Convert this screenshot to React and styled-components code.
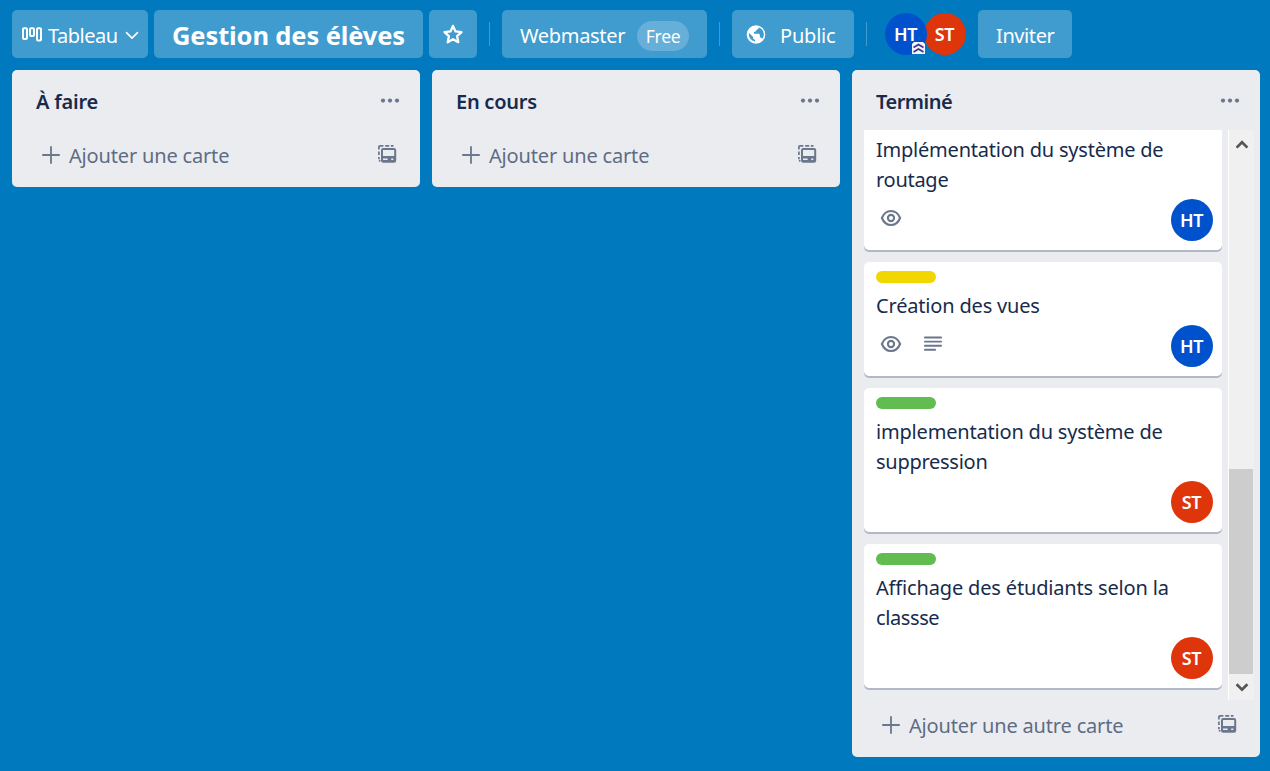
import React from "react";
import styled, { createGlobalStyle } from "styled-components";

const GlobalStyle = createGlobalStyle`
  * { box-sizing: border-box; }
  body {
    margin: 0;
    background: #0079bf;
    font-family: "Noto Sans", "Open Sans", sans-serif;
    font-size: 20px;
    color: #172b4d;
    overflow: hidden;
  }
  svg { display: block; flex: none; }
`;

const Page = styled.div`
  height: 771px;
  width: 1270px;
  padding: 10px 10px 14px 12px;
  display: flex;
  flex-direction: column;
  gap: 12px;
`;

const Header = styled.header`
  display: flex;
  align-items: center;
  height: 48px;
`;

const HeaderButton = styled.div`
  display: flex;
  align-items: center;
  justify-content: ${(p) => (p.$center ? "center" : "flex-start")};
  width: ${(p) => p.$width}px;
  height: 48px;
  padding-left: ${(p) => p.$pad || 0}px;
  margin-right: ${(p) => p.$after || 0}px;
  border-radius: 5px;
  background: #409bcf;
  color: #fff;
`;

const Text = styled.span`
  white-space: nowrap;
  line-height: 30px;
  letter-spacing: ${(p) => p.$track || 0}px;
`;

const ButtonText = styled(Text)`
  margin: 3px ${(p) => p.$right || 0}px 0 ${(p) => p.$left || 0}px;
`;

const BoardName = styled(Text)`
  margin-top: 2px;
  font-size: 25.5px;
  font-weight: 700;
`;

const Divider = styled.div`
  width: 1px;
  height: 24px;
  margin-right: 12px;
  background: #409bcf;
`;

const Plan = styled.span`
  display: flex;
  align-items: center;
  justify-content: center;
  width: 52px;
  height: 30px;
  margin: 4px 0 0 12px;
  border-radius: 15px;
  background: #66afd9;
  font-size: 17.5px;
  letter-spacing: -0.3px;
`;

const Members = styled.div`
  display: flex;
  margin: 0 12px 0 6px;
`;

const Avatar = styled.div`
  position: relative;
  z-index: ${(p) => (p.$front ? 1 : 0)};
  display: flex;
  align-items: center;
  justify-content: center;
  flex: none;
  width: 42px;
  height: 42px;
  margin-left: ${(p) => p.$overlap || 0}px;
  padding: 0 1px 1px 0;
  border-radius: 50%;
  background: ${(p) => (p.$who === "HT" ? "#0052cc" : "#de350b")};
  color: #fff;
  font-size: 18px;
  font-weight: 600;
  line-height: 24px;
  letter-spacing: -0.3px;
`;

const AdminMark = styled.div`
  position: absolute;
  right: 2px;
  bottom: 1px;
`;

const Board = styled.main`
  display: flex;
  flex: 1;
  align-items: flex-start;
  gap: 12px;
  min-height: 0;
`;

const List = styled.section`
  display: flex;
  flex-direction: column;
  width: 408px;
  height: ${(p) => (p.$full ? "687px" : "117px")};
  border-radius: 5px;
  background: #ebecf0;
`;

const ListHeader = styled.div`
  display: flex;
  align-items: center;
  justify-content: space-between;
  height: 60px;
  padding: 1px 20px 0 24px;
`;

const ListTitle = styled(Text)`
  margin-top: 3px;
  font-weight: 600;
`;

const ListFooter = styled.div`
  display: flex;
  align-items: center;
  height: 57px;
  padding: 0 23px 7px 30px;
  color: #5e6c84;
`;

const AddLabel = styled(Text)`
  flex: 1;
  margin: 2px 0 0 9px;
`;

const TemplateButton = styled.div`
  margin-bottom: 2px;
`;

const ListBody = styled.div`
  display: flex;
  height: 570px;
  padding-left: 12px;
`;

const Cards = styled.div`
  display: flex;
  flex-direction: column;
  justify-content: flex-end;
  gap: 12px;
  width: 358px;
  height: 570px;
  padding-bottom: 12px;
  overflow: hidden;
`;

const Card = styled.article`
  flex: none;
  padding: 9px 9px 9px 12px;
  border-radius: 5px;
  background: #fff;
  box-shadow: 0 2px 0 #b2b8c6;
`;

const Label = styled.div`
  width: 60px;
  height: 12px;
  margin-bottom: 8px;
  border-radius: 6px;
  background: ${(p) => p.$color};
`;

const CardTitle = styled.div`
  display: flex;
  flex-direction: column;
`;

const CardFooter = styled.div`
  display: flex;
  align-items: center;
  gap: 21px;
  height: 42px;
  margin-top: 4px;
  padding-left: 4px;

  ${Avatar} { margin-left: auto; }
`;

const Badge = styled.div`
  margin-bottom: 5px;
`;

const Scrollbar = styled.div`
  display: flex;
  flex-direction: column;
  justify-content: space-between;
  width: 26px;
  height: 570px;
  margin-left: 6px;
  padding-right: 1px;
  border-left: 1px solid #fff;
  background: #f0f0f0;
`;

const ScrollArrow = styled.div`
  display: flex;
  align-items: center;
  justify-content: center;
  height: 26px;
  padding: ${(p) => (p.$up ? 3 : 0)}px 0 0 1px;
`;

const ScrollThumb = styled.div`
  height: 205px;
  margin-top: auto;
  background: #cdcdcd;
`;

const BoardIcon = () => (
  <svg width="20" height="15" viewBox="0 0 20 15" fill="none" stroke="#fff" strokeWidth="2">
    <rect x="1" y="1.2" width="4" height="10.8" rx="1" />
    <rect x="8" y="1.2" width="4" height="7.8" rx="1" />
    <rect x="15" y="1.2" width="4" height="12.2" rx="1" />
  </svg>
);

const ChevronIcon = () => (
  <svg width="14" height="12" viewBox="0 0 14 12" fill="none" stroke="#fff" strokeWidth="1.6" strokeLinecap="round" strokeLinejoin="round">
    <path d="M1.500 4.600 7 10.100l5.500-5.500" />
  </svg>
);

const StarIcon = () => (
  <svg width="22" height="22" viewBox="0 0 22 22" fill="none" stroke="#fff" strokeWidth="2.300" strokeLinejoin="round">
    <path d="m11 2.900 2.500 5.500 6 .700-4.400 4.100 1.200 6-5.300-3-5.300 3 1.200-6-4.400-4.100 6-.700Z" />
  </svg>
);

const GlobeIcon = () => (
  <svg width="20" height="20" viewBox="0 0 20 20">
    <circle cx="10" cy="10.500" r="9.300" fill="#fff" />
    <path
      fill="#409bcf"
      d="M12.600 3.200c.3 1.500-.5 2.400-2.100 2.600-.3 1.500-1.100 2.100-2.600 2.200v1.700h4.300c1.100 0 1.700.7 1.700 1.700v2.200c1.100 0 1.800.4 2.300 1.200 1.900-2.300 2.100-5 .8-7.900-.9-1.700-2.400-3-4.400-3.700ZM3 8.900c-.7 4.500 1.800 7.800 6 8.700v-1.900c-1.200 0-1.900-.8-1.900-1.900v-.9Z"
    />
  </svg>
);

const AdminIcon = () => (
  <svg width="13" height="12" viewBox="0 0 13 12">
    <path fill="#f4f5f7" d="M2 0h9l2 2v10H0V2Z" />
    <path fill="none" stroke="#403294" strokeWidth="1.700" d="m1.500 5.500 5-3 5 3M1.500 10l5-3 5 3" />
  </svg>
);

const MoreIcon = () => (
  <svg width="20" height="6" viewBox="0 0 20 6" fill="#6b778c">
    <circle cx="3" cy="2.600" r="2.100" />
    <circle cx="10" cy="2.600" r="2.100" />
    <circle cx="17" cy="2.600" r="2.100" />
  </svg>
);

const PlusIcon = () => (
  <svg width="18" height="18" viewBox="0 0 18 18" stroke="#6b778c" strokeWidth="1.800" strokeLinecap="round">
    <path d="M9 .900v16.200M.900 9h16.200" />
  </svg>
);

const TemplateIcon = () => (
  <svg width="19" height="18" viewBox="0 0 19 18" fill="none" stroke="#6b778c">
    <path strokeWidth="1.700" d="M.900 4.500V2.200Q.900.900 2.200.900H5.400M7.200.900h4M12.800.900h2.700M.900 6.500v3.500M.900 12v2.200M.900 15.500l1.500.6" />
    <rect x="4" y="4" width="13.200" height="12.800" rx="1.200" strokeWidth="2" />
    <path fill="#6b778c" stroke="none" d="M4 11h13.200v5.600H4Z" />
    <path stroke="#ebecf0" strokeWidth="1.600" d="M5 14.200h4.600M13.200 14.200h2.100" />
  </svg>
);

const EyeIcon = () => (
  <svg width="22" height="18" viewBox="0 0 22 18" fill="none" stroke="#6b778c" strokeWidth="2.100">
    <path d="M1.900 9C3.800 4.300 6.800 2 11 2s7.200 2.300 9.100 7c-1.900 4.700-4.900 7-9.100 7S3.800 13.700 1.900 9Z" />
    <circle cx="11" cy="9" r="3.100" />
  </svg>
);

const DescriptionIcon = () => (
  <svg width="20" height="16" viewBox="0 0 20 16" stroke="#6b778c" strokeWidth="1.900" strokeLinecap="round">
    <path d="M1.900 1.500h16.200M1.900 5.600h16.200M1.900 9.700h16.200M1.900 13.800h10.200" />
  </svg>
);

const ArrowIcon = ({ up }) => (
  <svg width="14" height="10" viewBox="0 0 14 10" fill="none" stroke="#555" strokeWidth="2.700">
    <path d={up ? "m1.600 7.600 5.400-5.400 5.400 5.400" : "m1.600 2.200 5.400 5.400 5.400-5.400"} />
  </svg>
);

const cards = [
  { lines: [["Implémentation du système de", -0.22], ["routage", -0.28]], who: "HT", watch: true },
  { label: "#f2d600", lines: [["Création des vues", -0.18]], who: "HT", watch: true, description: true },
  { label: "#61bd4f", lines: [["implementation du système de", -0.19], ["suppression", -0.27]], who: "ST" },
  { label: "#61bd4f", lines: [["Affichage des étudiants selon la", -0.16], ["classse", -0.4]], who: "ST" },
];

function BoardList({ title, track, add, children }) {
  return (
    <List $full={!!children}>
      <ListHeader>
        <ListTitle $track={track}>{title}</ListTitle>
        <MoreIcon />
      </ListHeader>
      {children}
      <ListFooter>
        <PlusIcon />
        <AddLabel $track={-0.17}>{add}</AddLabel>
        <TemplateButton><TemplateIcon /></TemplateButton>
      </ListFooter>
    </List>
  );
}

export default function App() {
  return (
    <>
      <GlobalStyle />
      <Page>
        <Header>
          <HeaderButton $width={136} $pad={10} $after={6}>
            <BoardIcon />
            <ButtonText $track={-0.5} $left={6} $right={7}>Tableau</ButtonText>
            <ChevronIcon />
          </HeaderButton>
          <HeaderButton $width={269} $pad={18} $after={6}>
            <BoardName $track={-0.12}>Gestion des élèves</BoardName>
          </HeaderButton>
          <HeaderButton $width={48} $center $after={12}>
            <StarIcon />
          </HeaderButton>
          <Divider />
          <HeaderButton $width={205} $pad={18} $after={12}>
            <ButtonText $track={-0.33}>Webmaster</ButtonText>
            <Plan>Free</Plan>
          </HeaderButton>
          <Divider />
          <HeaderButton $width={122} $pad={14} $after={12}>
            <GlobeIcon />
            <ButtonText $track={-0.2} $left={14}>Public</ButtonText>
          </HeaderButton>
          <Divider />
          <Members>
            <Avatar $who="HT" $front>
              HT
              <AdminMark><AdminIcon /></AdminMark>
            </Avatar>
            <Avatar $who="ST" $overlap={-3}>ST</Avatar>
          </Members>
          <HeaderButton $width={94} $pad={18}>
            <ButtonText $track={-0.4}>Inviter</ButtonText>
          </HeaderButton>
        </Header>
        <Board>
          <BoardList title="À faire" track={-0.2} add="Ajouter une carte" />
          <BoardList title="En cours" track={-0.25} add="Ajouter une carte" />
          <BoardList title="Terminé" track={-0.5} add="Ajouter une autre carte">
            <ListBody>
              <Cards>
                {cards.map((card) => (
                  <Card key={card.lines[0][0]}>
                    {card.label && <Label $color={card.label} />}
                    <CardTitle>
                      {card.lines.map(([line, track]) => (
                        <Text key={line} $track={track}>{line}</Text>
                      ))}
                    </CardTitle>
                    <CardFooter>
                      {card.watch && <Badge><EyeIcon /></Badge>}
                      {card.description && <Badge><DescriptionIcon /></Badge>}
                      <Avatar $who={card.who}>{card.who}</Avatar>
                    </CardFooter>
                  </Card>
                ))}
              </Cards>
              <Scrollbar>
                <ScrollArrow $up><ArrowIcon up /></ScrollArrow>
                <ScrollThumb />
                <ScrollArrow><ArrowIcon /></ScrollArrow>
              </Scrollbar>
            </ListBody>
          </BoardList>
        </Board>
      </Page>
    </>
  );
}
